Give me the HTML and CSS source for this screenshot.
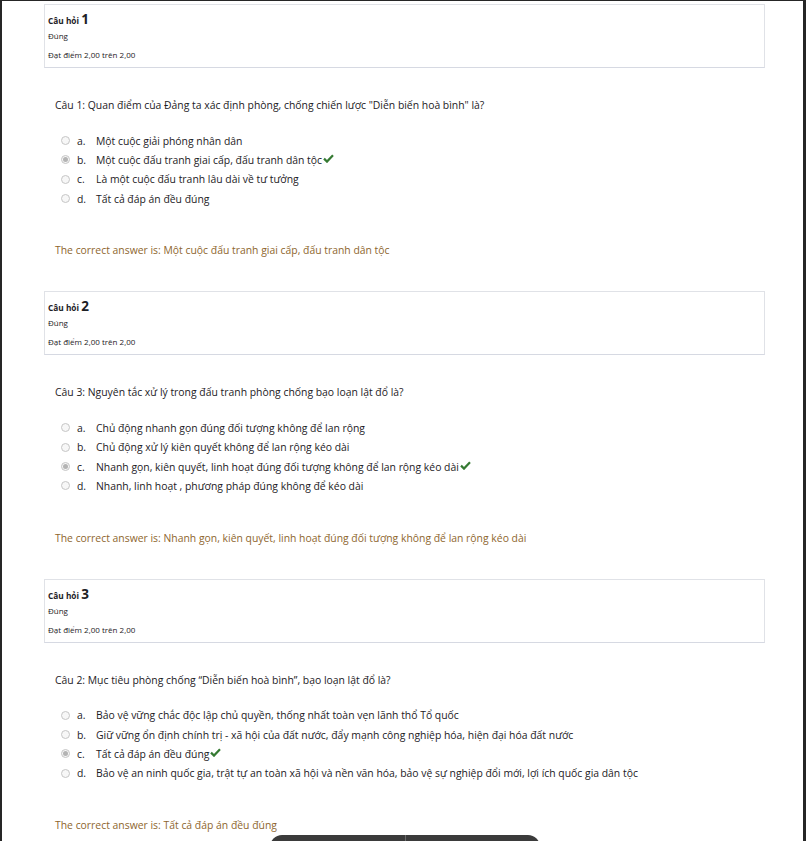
FILE: index.html
```html
<!DOCTYPE html>
<html lang="vi">
<head>
<meta charset="utf-8">
<title>Quiz review</title>
<link rel="stylesheet" href="styles.css">
</head>
<body>
<div class="page">
  <div class="que">
    <div class="info">
      <h3 class="no">Câu hỏi <span class="qno">1</span></h3>
      <div class="state">Đúng</div>
      <div class="grade">Đạt điểm 2,00 trên 2,00</div>
    </div>
    <div class="content">
      <div class="qtext">Câu 1: Quan điểm của Đảng ta xác định phòng, chống chiến lược "Diễn biến hoà bình" là?</div>
      <div class="answer">
        <div class="opt"><span class="radio"></span><span class="letter">a.</span><span class="txt">Một cuộc giải phóng nhân dân</span></div>
        <div class="opt"><span class="radio checked"></span><span class="letter">b.</span><span class="txt">Một cuộc đấu tranh giai cấp, đấu tranh dân tộc</span><svg class="tick" viewBox="0 0 11 9"><path d="M1 4.6 L4 7.6 L10 1.2"/></svg></div>
        <div class="opt"><span class="radio"></span><span class="letter">c.</span><span class="txt">Là một cuộc đấu tranh lâu dài về tư tưởng</span></div>
        <div class="opt"><span class="radio"></span><span class="letter">d.</span><span class="txt">Tất cả đáp án đều đúng</span></div>
      </div>
      <div class="rightanswer">The correct answer is: Một cuộc đấu tranh giai cấp, đấu tranh dân tộc</div>
    </div>
  </div>

  <div class="que">
    <div class="info">
      <h3 class="no">Câu hỏi <span class="qno">2</span></h3>
      <div class="state">Đúng</div>
      <div class="grade">Đạt điểm 2,00 trên 2,00</div>
    </div>
    <div class="content">
      <div class="qtext">Câu 3: Nguyên tắc xử lý trong đấu tranh phòng chống bạo loạn lật đổ là?</div>
      <div class="answer">
        <div class="opt"><span class="radio"></span><span class="letter">a.</span><span class="txt">Chủ động nhanh gọn đúng đối tượng không để lan rộng</span></div>
        <div class="opt"><span class="radio"></span><span class="letter">b.</span><span class="txt">Chủ động xử lý kiên quyết không để lan rộng kéo dài</span></div>
        <div class="opt"><span class="radio checked"></span><span class="letter">c.</span><span class="txt">Nhanh gọn, kiên quyết, linh hoạt đúng đối tượng không để lan rộng kéo dài</span><svg class="tick" viewBox="0 0 11 9"><path d="M1 4.6 L4 7.6 L10 1.2"/></svg></div>
        <div class="opt"><span class="radio"></span><span class="letter">d.</span><span class="txt">Nhanh, linh hoạt , phương pháp đúng không để kéo dài</span></div>
      </div>
      <div class="rightanswer">The correct answer is: Nhanh gọn, kiên quyết, linh hoạt đúng đối tượng không để lan rộng kéo dài</div>
    </div>
  </div>

  <div class="que">
    <div class="info">
      <h3 class="no">Câu hỏi <span class="qno">3</span></h3>
      <div class="state">Đúng</div>
      <div class="grade">Đạt điểm 2,00 trên 2,00</div>
    </div>
    <div class="content">
      <div class="qtext">Câu 2: Mục tiêu phòng chống “Diễn biến hoà bình”, bạo loạn lật đổ là?</div>
      <div class="answer">
        <div class="opt"><span class="radio"></span><span class="letter">a.</span><span class="txt">Bảo vệ vững chắc độc lập chủ quyền, thống nhất toàn vẹn lãnh thổ Tổ quốc</span></div>
        <div class="opt"><span class="radio"></span><span class="letter">b.</span><span class="txt">Giữ vững ổn định chính trị - xã hội của đất nước, đẩy mạnh công nghiệp hóa, hiện đại hóa đất nước</span></div>
        <div class="opt"><span class="radio checked"></span><span class="letter">c.</span><span class="txt">Tất cả đáp án đều đúng</span><svg class="tick" viewBox="0 0 11 9"><path d="M1 4.6 L4 7.6 L10 1.2"/></svg></div>
        <div class="opt"><span class="radio"></span><span class="letter">d.</span><span class="txt">Bảo vệ an ninh quốc gia, trật tự an toàn xã hội và nền văn hóa, bảo vệ sự nghiệp đổi mới, lợi ích quốc gia dân tộc</span></div>
      </div>
      <div class="rightanswer">The correct answer is: Tất cả đáp án đều đúng</div>
    </div>
  </div>
</div>
<div class="pill"><span class="pill-half"></span><span class="pill-half"></span></div>
</body>
</html>
```
FILE: styles.css
```css
html, body {
  margin: 0;
  padding: 0;
}
body {
  background: #262626;
  height: 841px;
  overflow: hidden;
  font-family: "Open Sans", "Noto Sans", sans-serif;
  color: #1d2125;
  position: relative;
}
.page {
  background: #fff;
  margin: 1px 3px 0 2px;
  padding: 3px 38px 0 42px;
  height: 900px;
}
.que {
  margin-bottom: 33px;
}
.info {
  border: 1px solid #e0e2e7;
  border-bottom-color: #d6d9e2;
  padding: 6px 3px 3px 3px;
  font-size: 8px;
}
.no {
  margin: 0;
  font-size: 8.3px;
  font-weight: 700;
  line-height: 16px;
  height: 16px;
}
.qno {
  font-size: 13.5px;
}
.state {
  line-height: 18px;
}
.grade {
  line-height: 18px;
  margin-top: 1px;
}
.content {
  padding-left: 11px;
  font-size: 10.4px;
}
.qtext {
  margin-top: 29px;
  line-height: 16px;
  color: #1d2125;
}
.answer {
  margin-top: 18px;
  padding-left: 6px;
}
.opt {
  display: flex;
  align-items: center;
  height: 19.33px;
}
.radio {
  width: 7px;
  height: 7px;
  border: 1px solid #c6c6c6;
  border-radius: 50%;
  background: #f7f7f7;
  margin-right: 7px;
  flex: none;
  display: flex;
  align-items: center;
  justify-content: center;
}
.radio.checked::after {
  content: "";
  width: 5px;
  height: 5px;
  border-radius: 50%;
  background: #b4b4b4;
}
.letter {
  width: 19px;
  flex: none;
}
.txt {
  white-space: nowrap;
}
.tick {
  width: 11px;
  height: 9px;
  margin-left: 1px;
  margin-top: -3px;
  flex: none;
}
.tick path {
  fill: none;
  stroke: #357a32;
  stroke-width: 2.2;
  stroke-linecap: butt;
  stroke-linejoin: miter;
}
.rightanswer {
  margin-top: 34px;
  line-height: 16px;
  color: #8e662e;
}
.pill {
  position: absolute;
  left: 270px;
  top: 835px;
  width: 270px;
  height: 24px;
  border-radius: 12px;
  background: #3b3b3b;
  display: flex;
}
.pill-half {
  flex: 1;
}
.pill-half + .pill-half {
  border-left: 1px solid #6a6a6a;
}
```
